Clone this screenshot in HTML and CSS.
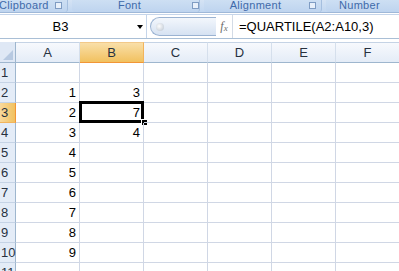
FILE: index.html
```html
<!DOCTYPE html>
<html lang="en">
<head>
    <meta charset="UTF-8">
    <title>QUARTILE</title>
    <link rel="stylesheet" href="styles.css">
</head>
<body>

<!-- Ribbon group labels -->
<div class="ribbon">
    <div class="group group-clipboard"><span class="label">Clipboard</span><span class="launcher"></span></div>
    <div class="group group-font"><span class="label">Font</span><span class="launcher"></span></div>
    <div class="group group-align"><span class="label">Alignment</span><span class="launcher"></span></div>
    <div class="group group-number"><span class="label">Number</span></div>
</div>

<!-- Formula bar -->
<div class="formula-bar">
    <div class="name-box">
        <span class="name">B3</span>
        <span class="arrow"></span>
    </div>
    <div class="pill"><span class="knob"></span></div>
    <div class="fx"><i>f</i><span>x</span></div>
    <div class="formula">=QUARTILE(A2:A10,3)</div>
</div>

<!-- Sheet -->
<div class="sheet" id="sheet"></div>

<script>
    const sheet = document.getElementById('sheet');
    const cols = ['A', 'B', 'C', 'D', 'E', 'F'];
    const data = {
        A2: 1, A3: 2, A4: 3, A5: 4, A6: 5, A7: 6, A8: 7, A9: 8, A10: 9,
        B2: 3, B3: 7, B4: 4
    };

    let html = '<div class="corner"><span class="tri"></span></div>';
    cols.forEach(c => {
        html += `<div class="col-head${c === 'B' ? ' active' : ''}">${c}</div>`;
    });
    for (let r = 1; r <= 11; r++) {
        html += `<div class="row-head${r === 3 ? ' active' : ''}">${r}</div>`;
        cols.forEach(c => {
            const key = c + r;
            const val = data[key] !== undefined ? data[key] : '';
            const sel = key === 'B3' ? ' selected' : '';
            html += `<div class="cell${sel}">${val}${sel ? '<span class="outline"></span><span class="handle"></span>' : ''}</div>`;
        });
    }
    sheet.innerHTML = html;
</script>

</body>
</html>
```

FILE: styles.css
```css
* {
    margin: 0;
    padding: 0;
    box-sizing: border-box;
}

body {
    width: 399px;
    height: 271px;
    overflow: hidden;
    background: #fff;
    font-family: 'Liberation Sans', Arial, sans-serif;
}

/* Ribbon labels */
.ribbon {
    display: flex;
    height: 13px;
    background: linear-gradient(#d5e3f4, #c1d7f1);
    border-bottom: 1px solid #9fb8d8;
}

.group {
    position: relative;
    display: flex;
    align-items: flex-start;
    height: 12px;
    font-size: 11px;
    line-height: 11px;
    color: #3e6aaa;
    border-right: 1px solid #a5bfdf;
    border-radius: 0 0 3px 3px;
    background: linear-gradient(#cddff3, #bed4ef);
}

.group .label {
    letter-spacing: 0.3px;
}

.group-clipboard {
    width: 69px;
    margin-left: -1px;
}

.group-font {
    width: 128px;
    margin-left: 4px;
    justify-content: center;
    padding-right: 12px;
}

.group-align {
    width: 118px;
    margin-left: 4px;
    justify-content: center;
    padding-right: 14px;
}

.group-number {
    flex: 1;
    margin-left: 4px;
    padding-left: 13px;
    border-right: none;
}

.launcher {
    position: absolute;
    right: 5px;
    top: 2px;
    width: 7px;
    height: 7px;
    border: 1px solid #7f9cc3;
    background: #e8f0fa;
}

.group-font .launcher {
    right: 0;
}

/* Formula bar */
.formula-bar {
    display: flex;
    align-items: center;
    height: 25px;
    margin-top: 1px;
    background: #fff;
    border-top: 1px solid #c5d5ea;
    border-bottom: 1px solid #a9bfd6;
}

.name-box {
    display: flex;
    align-items: center;
    width: 147px;
    height: 23px;
    border-right: 1px solid #c5d5ea;
}

.name {
    width: 121px;
    text-align: center;
    font-size: 13px;
    color: #000;
}

.arrow {
    margin-left: 16px;
    width: 0;
    height: 0;
    border-left: 3px solid transparent;
    border-right: 3px solid transparent;
    border-top: 4px solid #000;
}

.pill {
    display: flex;
    align-items: center;
    width: 66px;
    height: 19px;
    margin-left: 3px;
    padding-left: 5px;
    border: 1px solid #9bb3d2;
    border-right: none;
    border-radius: 10px 0 0 10px;
    background: linear-gradient(#f3f7fc, #d6e2f2);
}

.knob {
    width: 8px;
    height: 8px;
    border-radius: 50%;
    background: radial-gradient(circle at 40% 40%, #fdfdfd, #b9c3cf);
}

.fx {
    width: 17px;
    height: 23px;
    display: flex;
    align-items: center;
    justify-content: center;
    font-family: 'Liberation Serif', serif;
    font-size: 12px;
    color: #6b6b6b;
    border-right: 1px solid #d3dbe6;
    margin-right: 6px;
}

.fx span {
    font-size: 9px;
    font-style: italic;
    margin-top: 3px;
}

.formula {
    font-size: 13px;
    color: #000;
    white-space: nowrap;
}

/* Sheet */
.sheet {
    margin-top: 3px;
    display: grid;
    grid-template-columns: 16px repeat(6, 64px);
    grid-template-rows: 21px repeat(11, 20px);
    background: #fff;
}

.corner {
    position: relative;
    background: #dfe8f5;
    border-right: 1px solid #9eb6ce;
    border-bottom: 1px solid #9eb6ce;
}

.corner .tri {
    position: absolute;
    right: 2px;
    bottom: 2px;
    width: 0;
    height: 0;
    border-left: 10px solid transparent;
    border-bottom: 10px solid #b7c9e1;
}

.col-head {
    display: flex;
    align-items: center;
    justify-content: center;
    font-size: 13px;
    color: #27313f;
    background: linear-gradient(#f7f9fd, #e4ecf7);
    border-right: 1px solid #d5dfec;
    border-bottom: 1px solid #9eb6ce;
    border-top: 1px solid #c5d3e5;
}

.col-head.active {
    background: linear-gradient(#f9dfa9, #f1c15f);
    border-right: 1px solid #f2b45c;
    border-bottom: 1px solid #f29536;
    border-top: 1px solid #f2c98a;
}

.row-head {
    display: flex;
    align-items: center;
    font-size: 13px;
    color: #27313f;
    padding-left: 1px;
    background: #e4ecf7;
    border-right: 1px solid #9eb6ce;
    border-bottom: 1px solid #c5d3e5;
    white-space: nowrap;
}

.row-head.active {
    background: linear-gradient(90deg, #f8d99b, #f1c15f);
    border-right: 1px solid #f29536;
    border-bottom: 1px solid #f2b45c;
}

.cell {
    position: relative;
    display: flex;
    align-items: center;
    justify-content: flex-end;
    padding-right: 3px;
    font-size: 13px;
    color: #000;
    border-right: 1px solid #d0d7e5;
    border-bottom: 1px solid #d0d7e5;
}

.cell .outline {
    position: absolute;
    left: -1px;
    top: -2px;
    right: -1px;
    bottom: -1px;
    border: 3px solid #000;
}

.cell .handle {
    position: absolute;
    right: -4px;
    bottom: -3px;
    width: 6px;
    height: 6px;
    background: #000;
    border: 1px solid #fff;
    border-right: none;
    border-bottom: none;
}
```
